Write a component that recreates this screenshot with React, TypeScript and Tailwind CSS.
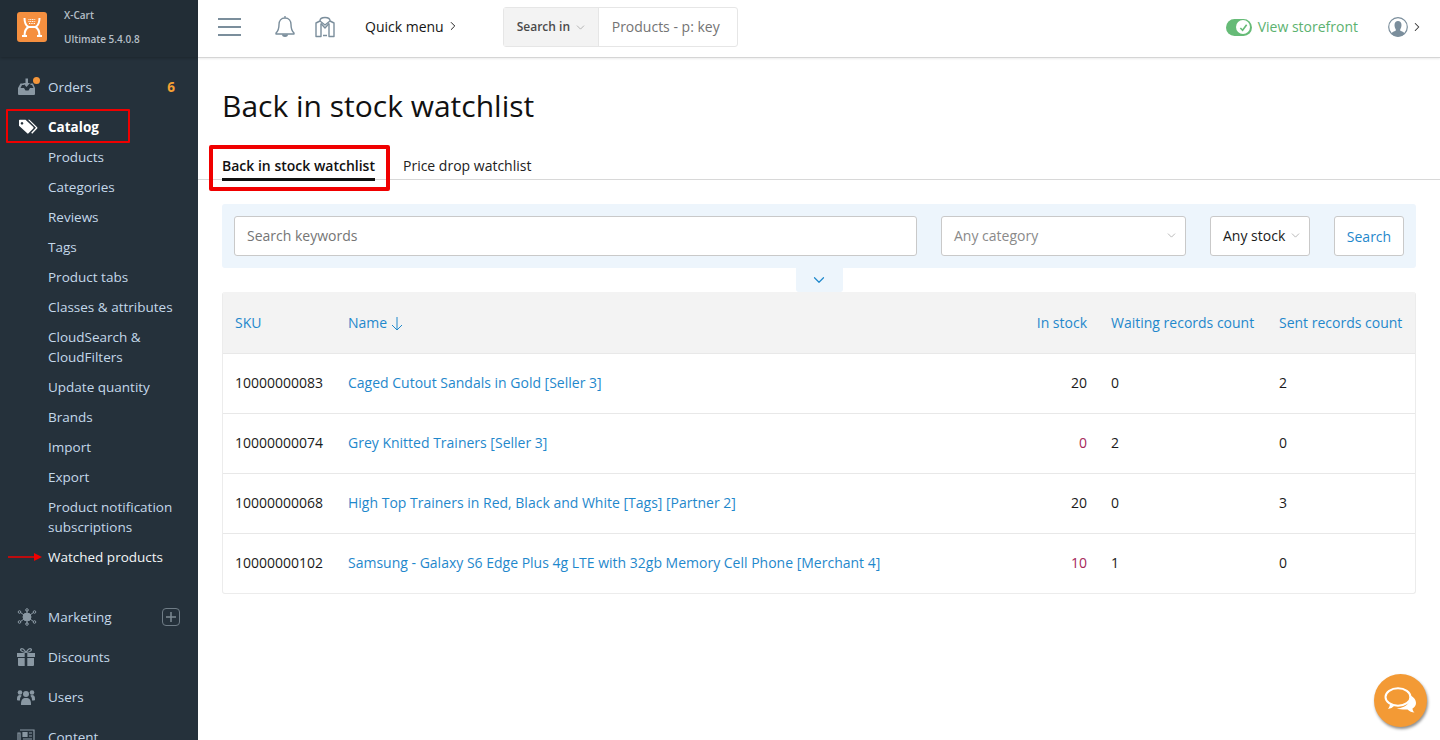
// App.tsx - X-Cart admin, back in stock watchlist
import React from "react";
import { ChevronDown, ChevronRight } from "lucide-react";

const subItems: { label: string; lines?: string[] }[] = [
  { label: "Products" },
  { label: "Categories" },
  { label: "Reviews" },
  { label: "Tags" },
  { label: "Product tabs" },
  { label: "Classes & attributes" },
  { label: "CloudSearch & CloudFilters", lines: ["CloudSearch &", "CloudFilters"] },
  { label: "Update quantity" },
  { label: "Brands" },
  { label: "Import" },
  { label: "Export" },
  { label: "Product notification subscriptions", lines: ["Product notification", "subscriptions"] },
];

const rows = [
  { sku: "10000000083", name: "Caged Cutout Sandals in Gold [Seller 3]", stock: 20, low: false, waiting: 0, sent: 2 },
  { sku: "10000000074", name: "Grey Knitted Trainers [Seller 3]", stock: 0, low: true, waiting: 2, sent: 0 },
  { sku: "10000000068", name: "High Top Trainers in Red, Black and White [Tags] [Partner 2]", stock: 20, low: false, waiting: 0, sent: 3 },
  { sku: "10000000102", name: "Samsung - Galaxy S6 Edge Plus 4g LTE with 32gb Memory Cell Phone [Merchant 4]", stock: 10, low: true, waiting: 1, sent: 0 },
];

const Logo = () => (
  <div className="w-[30px] h-[30px] rounded-[3px] bg-[#f58f3f] flex items-center justify-center">
    <svg width="30" height="30" viewBox="0 0 30 30" fill="none" stroke="#fff" strokeWidth="2">
      <path d="M7.500 6c0 4.500 1 7.500 4 9-3 1.500-4 4.500-4 9M22.500 6c0 4.500-1 7.500-4 9 3 1.500 4 4.500 4 9" />
      <path d="M5 24h5M20 24h5M11 15h8" />
      <path d="M11.500 7.500h7M11.500 9.500h7M12 11.500h6" strokeWidth="1.200" strokeDasharray="1 .7" />
    </svg>
  </div>
);

const OrdersIcon = () => (
  <svg width="24" height="20" viewBox="0 0 24 20" fill="#8a98a3">
    <path d="M1 11l2.500-4.500H7V8H5L3.500 11H7l1.500 2.500h3L13 11h3.500L15 8h-1.500V6.500H16l2 4.500v6a1 1 0 0 1-1 1H2a1 1 0 0 1-1-1z" />
    <path d="M8.500 1.500h2.500v4.500h2l-3.500 4-3.500-4h2.500z" />
    <circle cx="19.500" cy="3.500" r="3.500" fill="#f5963a" />
  </svg>
);

const TagIcon = () => (
  <svg width="20" height="16" viewBox="0 0 20 16" fill="#fff">
    <path d="M1 1.500A.8.8 0 0 1 1.800.700h5.700l7.800 7.400a.9.9 0 0 1 0 1.300l-4.800 4.900a.9.9 0 0 1-1.300 0L1 6.800zM4 3a1.300 1.300 0 1 0 .01 0z" fillRule="evenodd" />
    <path d="M10 .700h1.500l7.700 7.500a1 1 0 0 1 0 1.300l-5 5.200-1-.9 4.700-5z" />
  </svg>
);

const MarketingIcon = () => (
  <svg width="20" height="18" viewBox="0 0 20 18" fill="none" stroke="#8a98a3" strokeWidth="1">
    <circle cx="10" cy="9" r="4" fill="#8a98a3" />
    <path d="M10 2v3M10 13v3M3.500 4.500L7 7M16.500 4.500L13 7M3.500 13.500L7 11M16.500 13.500L13 11" />
    <circle cx="10" cy="2" r="1.300" />
    <circle cx="10" cy="16" r="1.300" />
    <circle cx="2.500" cy="4" r="1.300" />
    <circle cx="17.500" cy="4" r="1.300" />
    <circle cx="2.500" cy="14" r="1.300" />
    <circle cx="17.500" cy="14" r="1.300" />
  </svg>
);

const GiftIcon = () => (
  <svg width="18" height="18" viewBox="0 0 18 18" fill="#8a98a3">
    <path d="M0 5h7.700v4H0zM10.300 5H18v4h-7.700zM1 10h6.700v8H2a1 1 0 0 1-1-1zM10.300 10H17v7a1 1 0 0 1-1 1h-5.700z" />
    <path d="M9 4.500C7 1 5 0 4 1s0 3 4.500 3.500M9 4.500c2-3.500 4-4.500 5-3.500s0 3-4.500 3.500" fill="none" stroke="#8a98a3" strokeWidth="1.200" />
  </svg>
);

const UsersIcon = () => (
  <svg width="18" height="16" viewBox="0 0 18 16" fill="#8a98a3">
    <circle cx="9" cy="5" r="3" />
    <circle cx="3" cy="3.500" r="2.300" />
    <circle cx="15" cy="3.500" r="2.300" />
    <path d="M4 15.500c0-5 1.500-6.500 5-6.500s5 1.500 5 6.500a.5.5 0 0 1-.5.5h-9a.5.5 0 0 1-.5-.5z" />
    <path d="M0 10c0-3 1-4 3-4 .8 0 1.200.3 1.700.8C3.500 8 3 9 3 11.500H1a1 1 0 0 1-1-1.500zM18 10c0-3-1-4-3-4-.8 0-1.200.3-1.700.8C14.500 8 15 9 15 11.500h2a1 1 0 0 0 1-1.500z" />
  </svg>
);

const ContentIcon = () => (
  <svg width="18" height="16" viewBox="0 0 18 16" fill="none" stroke="#8a98a3" strokeWidth="1.200">
    <path d="M3 1h14v13a1 1 0 0 1-1 1H2a1 1 0 0 1-1-1V4h2v9" />
    <path d="M6 3.500h4v4H6z" fill="#8a98a3" />
    <path d="M12 4h3M12 7h3M6 10h9M6 12.500h9" />
  </svg>
);

const BellIcon = () => (
  <svg width="22" height="24" viewBox="0 0 22 24" fill="none" stroke="#7b8e9c" strokeWidth="1.400" strokeLinejoin="round">
    <path d="M11 3c-4 0-6 3-6 6.500 0 4-.7 6.500-3 8.500v1h18v-1c-2.300-2-3-4.500-3-8.500C17 6 15 3 11 3zM11 1v2" />
    <path d="M8.500 19.500c.5 2.500 4.500 2.500 5 0" fill="#7b8e9c" />
  </svg>
);

const MapIcon = () => (
  <svg width="20" height="22" viewBox="0 0 20 22" fill="none" stroke="#7b8e9c" strokeWidth="1.400" strokeLinejoin="round">
    <path d="M5 5L1 7v13.500h5V7.500M15 5l4 2v13.500h-5V7.500" />
    <path d="M5 5c0-2.500 2-3.500 5-3.500S15 2.500 15 5l-5 4z" />
    <path d="M6 7.500L10 12l4-4.500M8 19.500h4" />
  </svg>
);

const UserIcon = () => (
  <svg width="20" height="20" viewBox="0 0 20 20">
    <circle cx="10" cy="10" r="9.300" fill="#fff" stroke="#7b8e9c" strokeWidth="1.200" />
    <path d="M3.500 17c.3-2 2-2.500 3.500-3 1-.4 1-1.200.7-1.800C7 11 6.500 9.500 6.500 8c0-2.500 1.500-4 3.500-4s3.500 1.500 3.500 4c0 1.500-.5 3-1.200 4.200-.3.600-.3 1.400.7 1.800 1.500.5 3.200 1 3.500 3-1.700 1.700-4 2.500-6.500 2.500S5.200 18.700 3.500 17z" fill="#7b8e9c" />
  </svg>
);

const ChatIcon = () => (
  <svg width="36" height="30" viewBox="0 0 36 30">
    <path d="M26 9c3 1 7 3.500 7 8 0 2.500-1.500 4.500-3.500 5.500 0 1.500.8 3 2 4-2.500 0-5-1-7-3-3 .3-8 0-11-1 7 0 16-5 12.500-13.500z" fill="#fff" />
    <ellipse cx="15" cy="11" rx="12.500" ry="8.700" fill="none" stroke="#fff" strokeWidth="2" />
    <path d="M7 17.500c0 2-.8 4-2 5.500 2.500-.3 4.800-1.500 6.500-3.500z" fill="#fff" />
  </svg>
);

const MainRow = ({ icon, label, children }: { icon: React.ReactNode; label: string; children?: React.ReactNode }) => (
  <div className="h-[30px] mt-[10px] first:mt-0 flex items-center text-[#c4d8ea]">
    <div className="w-[48px] pl-[17px] shrink-0 flex items-center">{icon}</div>
    <span className="flex-1">{label}</span>
    {children}
  </div>
);

const Sidebar = () => (
  <aside className="relative w-[198px] shrink-0 h-full overflow-hidden bg-[#25313b] text-[13.5px]">
    <div className="h-[57px] flex items-start pl-[17px] pt-[12px] bg-[#222d36] shadow-[0_1px_3px_rgba(0,0,0,0.25)]">
      <Logo />
      <div className="ml-[17px] text-[10px] font-semibold text-[#b5bfc7] leading-[14px]">
        <div className="mt-[-4px]">X-Cart</div>
        <div className="mt-[10px]">Ultimate 5.4.0.8</div>
      </div>
    </div>
    <nav className="pt-[15px]">
      <MainRow icon={<OrdersIcon />} label="Orders">
        <span className="mr-[23px] font-bold text-[#f5a033]">6</span>
      </MainRow>
      <div className="h-[30px] mt-[10px] flex items-center font-bold text-white">
        <div className="w-[48px] pl-[18px] shrink-0 flex items-center">
          <TagIcon />
        </div>
        Catalog
      </div>
      {subItems.map((item) =>
        item.lines ? (
          <div key={item.label} className="pt-[5px] pb-[5px] pl-[48px] leading-[20px] text-[#c4d8ea]">
            {item.lines.map((l) => (
              <div key={l}>{l}</div>
            ))}
          </div>
        ) : (
          <div key={item.label} className="h-[30px] pl-[48px] flex items-center text-[#c4d8ea]">
            {item.label}
          </div>
        )
      )}
      <div className="h-[30px] pl-[48px] flex items-center text-[#f2f5f7]">Watched products</div>
      <div className="h-[20px]" />
      <MainRow icon={<MarketingIcon />} label="Marketing">
        <span className="mr-[18px] w-[18px] h-[18px] rounded-[4px] border border-[#6f7c86] flex items-center justify-center">
          <svg width="10" height="10" viewBox="0 0 10 10" stroke="#7d8a94" strokeWidth="1.500">
            <path d="M5 0v10M0 5h10" />
          </svg>
        </span>
      </MainRow>
      <MainRow icon={<GiftIcon />} label="Discounts" />
      <MainRow icon={<UsersIcon />} label="Users" />
      <MainRow icon={<ContentIcon />} label="Content" />
    </nav>
    {/* red annotations from the screenshot */}
    <div className="absolute left-[6px] top-[109px] w-[124px] h-[34px] border-[2px] border-[#f00000] rounded-[1px]" />
    <svg className="absolute left-[8px] top-[553px]" width="34" height="8" viewBox="0 0 34 8" fill="#f00000">
      <path d="M0 3.300h26V0l8 4-8 4V4.700H0z" />
    </svg>
  </aside>
);

const Topbar = () => (
  <header className="h-[58px] shrink-0 flex items-center pb-[3px] bg-white border-b border-[#d5d5d5] shadow-[0_1px_2px_rgba(0,0,0,0.08)] text-[14px]">
    <div className="ml-[20px] w-[23px] flex flex-col gap-[6px]">
      <div className="h-[2px] bg-[#7b8e9c]" />
      <div className="h-[2px] bg-[#7b8e9c]" />
      <div className="h-[2px] bg-[#7b8e9c]" />
    </div>
    <div className="ml-[33px]">
      <BellIcon />
    </div>
    <div className="ml-[19px]">
      <MapIcon />
    </div>
    <div className="ml-[30px] pb-[2px] flex items-center text-[#151515]">
      Quick menu
      <ChevronRight size={14} strokeWidth={1.700} className="ml-[2px] text-[#222]" />
    </div>
    <div className="ml-[43px] h-[40px] w-[235px] flex rounded-[3px] border border-[#e6e6e6]">
      <div className="w-[95px] flex items-center pl-[13px] bg-[#f3f3f3] border-r border-[#e6e6e6] text-[12px] font-semibold text-[#4a4a4a]">
        Search in
        <ChevronDown size={13} strokeWidth={1.100} className="ml-[4px] text-[#8a8a8a]" />
      </div>
      <div className="flex-1 flex items-center pl-[13px] pb-[2px] text-[#747474]">Products - p: key</div>
    </div>
    <div className="ml-auto flex items-center text-[#5cb270]">
      <div className="w-[26px] h-[17px] rounded-full bg-[#66bb77] flex items-center justify-end pr-[1.500px]">
        <div className="w-[14px] h-[14px] rounded-full bg-white flex items-center justify-center">
          <svg width="9" height="9" viewBox="0 0 10 10" fill="none" stroke="#66bb77" strokeWidth="1.800">
            <path d="M1.500 5.500L4 8l4.500-6" />
          </svg>
        </div>
      </div>
      <span className="ml-[6px] pb-[1px]">View storefront</span>
    </div>
    <div className="ml-[30px] mr-[16px] flex items-center text-[#333]">
      <UserIcon />
      <ChevronRight size={14} strokeWidth={1.800} className="ml-[2px]" />
    </div>
  </header>
);

const FilterBar = () => (
  <div className="mx-[24px] mt-[24px] h-[64px] rounded-[3px] bg-[#edf5fc] flex items-center px-[12px] text-[14px]">
    <div className="w-[683px] h-[40px] rounded-[3px] border border-[#c9c9c9] bg-white flex items-center pl-[12px] pb-[2px] text-[#757575]">
      Search keywords
    </div>
    <div className="ml-[24px] w-[245px] h-[40px] rounded-[3px] border border-[#c9c9c9] bg-white flex items-center justify-between pl-[12px] pr-[7px] pb-[2px] text-[#8a8a8a]">
      Any category
      <ChevronDown size={13} strokeWidth={1.100} className="text-[#8a8a8a]" />
    </div>
    <div className="ml-[24px] w-[100px] h-[40px] rounded-[3px] border border-[#c9c9c9] bg-white flex items-center justify-between pl-[12px] pr-[7px] pb-[2px] text-[#1a1a1a]">
      Any stock
      <ChevronDown size={13} strokeWidth={1.100} className="text-[#8a8a8a]" />
    </div>
    <div className="ml-[24px] w-[70px] h-[40px] rounded-[3px] border border-[#c9c9c9] bg-white flex items-center justify-center text-[#1f88cc]">
      Search
    </div>
  </div>
);

const Watchlist = () => (
  <div className="mx-[24px] rounded-[3px] border border-[#ececec] border-t-0 overflow-hidden text-[14px]">
    <table className="w-full table-fixed border-collapse">
      <colgroup>
        <col className="w-[113px]" />
        <col />
        <col className="w-[101px]" />
        <col className="w-[168px]" />
        <col className="w-[148px]" />
      </colgroup>
      <thead>
        <tr className="h-[61px] bg-[#f3f3f3] text-[#1f88cc] border-b border-[#e8e8e8]">
          <th className="pl-[12px] font-normal text-left">SKU</th>
          <th className="pl-[12px] font-normal text-left">
            <span className="inline-flex items-center">
              Name
              <svg className="ml-[4px] mt-[2px]" width="12" height="15" viewBox="0 0 12 15" fill="none" stroke="#1f88cc" strokeWidth="1">
                <path d="M6 1v13M1 9l5 5 5-5" />
              </svg>
            </span>
          </th>
          <th className="pr-[12px] font-normal text-right">In stock</th>
          <th className="pl-[12px] font-normal text-left">Waiting records count</th>
          <th className="pl-[12px] font-normal text-left whitespace-nowrap">Sent records count</th>
        </tr>
      </thead>
      <tbody>
        {rows.map((r) => (
          <tr key={r.sku} className="h-[60px] border-b last:border-b-0 border-[#e8e8e8] text-[#1a1a1a]">
            <td className="pl-[12px] pb-[2px]">{r.sku}</td>
            <td className="pl-[12px] pb-[2px] text-[#1f88cc] whitespace-nowrap">{r.name}</td>
            <td className={`pr-[12px] pb-[2px] text-right ${r.low ? "text-[#a6285a]" : ""}`}>{r.stock}</td>
            <td className="pl-[12px] pb-[2px]">{r.waiting}</td>
            <td className="pl-[12px] pb-[2px]">{r.sent}</td>
          </tr>
        ))}
      </tbody>
    </table>
  </div>
);

export default function App() {
  return (
    <div className="h-screen w-full overflow-hidden flex bg-white font-['Open_Sans',sans-serif] text-[#1a1a1a]">
      <Sidebar />
      <main className="relative flex-1 min-w-0 flex flex-col">
        <Topbar />
        <h1 className="ml-[24px] mt-[26px] text-[30px] leading-[44px] font-normal text-[#111]">Back in stock watchlist</h1>
        <div className="mt-[17px] h-[35px] border-b border-[#d8d8d8] flex pl-[24px] text-[14px]">
          <div className="h-[36px] font-semibold text-[#111] leading-[20px] pt-[11px] border-b-[3px] border-[#111]">
            Back in stock watchlist
          </div>
          <div className="ml-[28px] text-[#222] leading-[20px] pt-[11px]">Price drop watchlist</div>
        </div>
        <FilterBar />
        <div className="mx-auto w-[47px] h-[24px] rounded-b-[3px] bg-[#edf5fc] flex items-center justify-center">
          <ChevronDown size={18} strokeWidth={1.600} className="text-[#1f88cc]" />
        </div>
        <Watchlist />
        {/* red annotation round the active tab */}
        <div className="absolute left-[11px] top-[145px] w-[181px] h-[46px] border-[4px] border-[#f00000] rounded-[2px]" />
      </main>
      <div className="fixed left-[1374px] top-[674px] w-[53px] h-[53px] rounded-full bg-[#f39a35] shadow-[1px_2px_3px_rgba(0,0,0,0.45)] flex items-center justify-center">
        <ChatIcon />
      </div>
    </div>
  );
}
